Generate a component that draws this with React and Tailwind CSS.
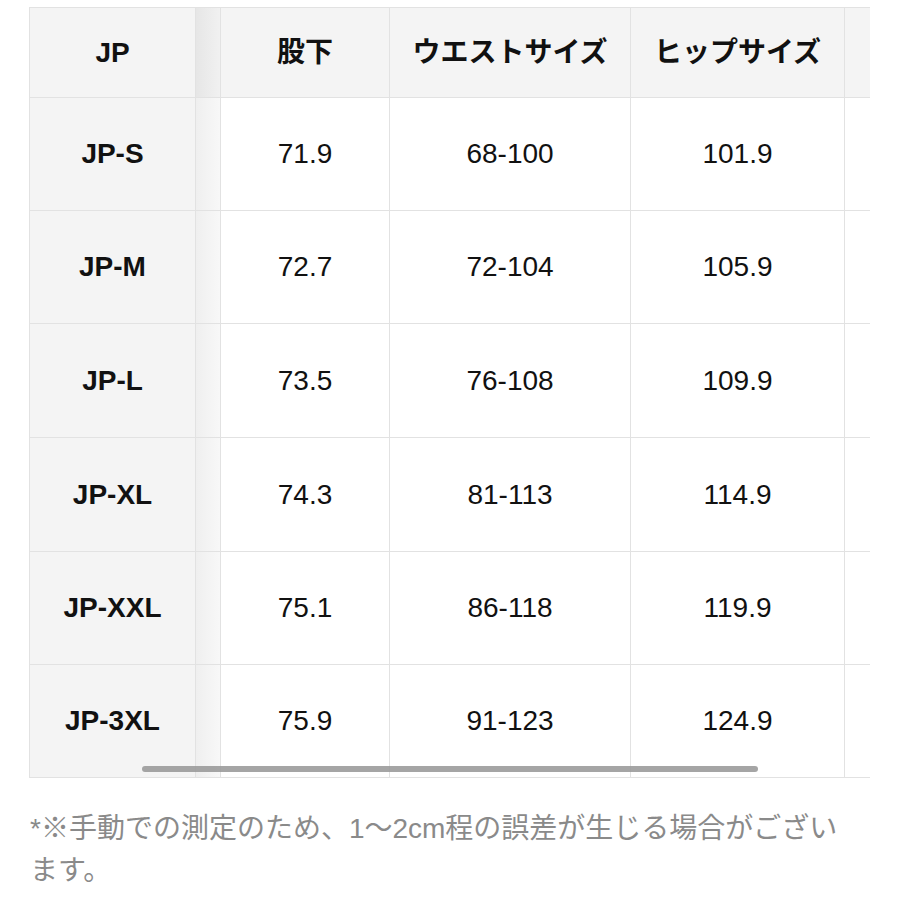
const columns = ['股下', 'ウエストサイズ', 'ヒップサイズ']

const rows = [
  { size: 'JP-S', values: ['71.9', '68-100', '101.9'], h: 'h-[113px]' },
  { size: 'JP-M', values: ['72.7', '72-104', '105.9'], h: 'h-[113px]' },
  { size: 'JP-L', values: ['73.5', '76-108', '109.9'], h: 'h-[114px]' },
  { size: 'JP-XL', values: ['74.3', '81-113', '114.9'], h: 'h-[114px]' },
  { size: 'JP-XXL', values: ['75.1', '86-118', '119.9'], h: 'h-[113px]' },
  { size: 'JP-3XL', values: ['75.9', '91-123', '124.9'], h: 'h-[113px]' },
]

const widths = ['w-[169px]', 'w-[241px]', 'w-[214px]']

function Row({ first, cells, h, header }) {
  return (
    <div className={`flex ${h}`}>
      <div
        className={`w-[166px] shrink-0 flex items-center justify-center bg-[#f4f4f4] border-r border-b border-[#e2e2e2] font-bold text-[#111]`}
      >
        {first}
      </div>
      <div
        className={`w-[25px] shrink-0 border-r border-b border-[#e2e2e2] ${
          header
            ? 'bg-gradient-to-r from-[#e6e6e6] to-[#f1f1f1]'
            : 'bg-gradient-to-r from-[#efefef] to-[#f8f8f8]'
        }`}
      />
      {cells.map((c, i) => (
        <div
          key={i}
          className={`${widths[i]} shrink-0 flex items-center justify-center border-r border-b border-[#e2e2e2] ${
            header ? 'bg-[#f4f4f4] font-bold' : 'bg-white'
          } text-[#111]`}
        >
          {c}
        </div>
      ))}
      <div
        className={`w-[60px] shrink-0 border-b border-[#e2e2e2] ${header ? 'bg-[#f4f4f4]' : 'bg-white'}`}
      />
    </div>
  )
}

export default function App() {
  return (
    <div
      className="min-h-[900px] w-[900px] bg-white pt-[7px] text-[28px]"
      style={{ fontFamily: '"Liberation Sans", "Noto Sans CJK JP", sans-serif' }}
    >
      <div className="relative ml-[29px] w-[841px] overflow-hidden border-t border-l border-[#e2e2e2]">
        <Row first="JP" cells={columns} h="h-[90px]" header />
        {rows.map((r) => (
          <Row key={r.size} first={r.size} cells={r.values} h={r.h} />
        ))}
        <div className="absolute left-[112px] top-[758px] h-[6px] w-[616px] rounded-full bg-[#9b9b9b]/90" />
      </div>
      <p className="mt-[30px] pl-[30px] pr-[40px] text-[28px] leading-[42px] text-[#8a8a8a]">
        *※手動での測定のため、1〜2cm程の誤差が生じる場合がございます。
      </p>
    </div>
  )
}
